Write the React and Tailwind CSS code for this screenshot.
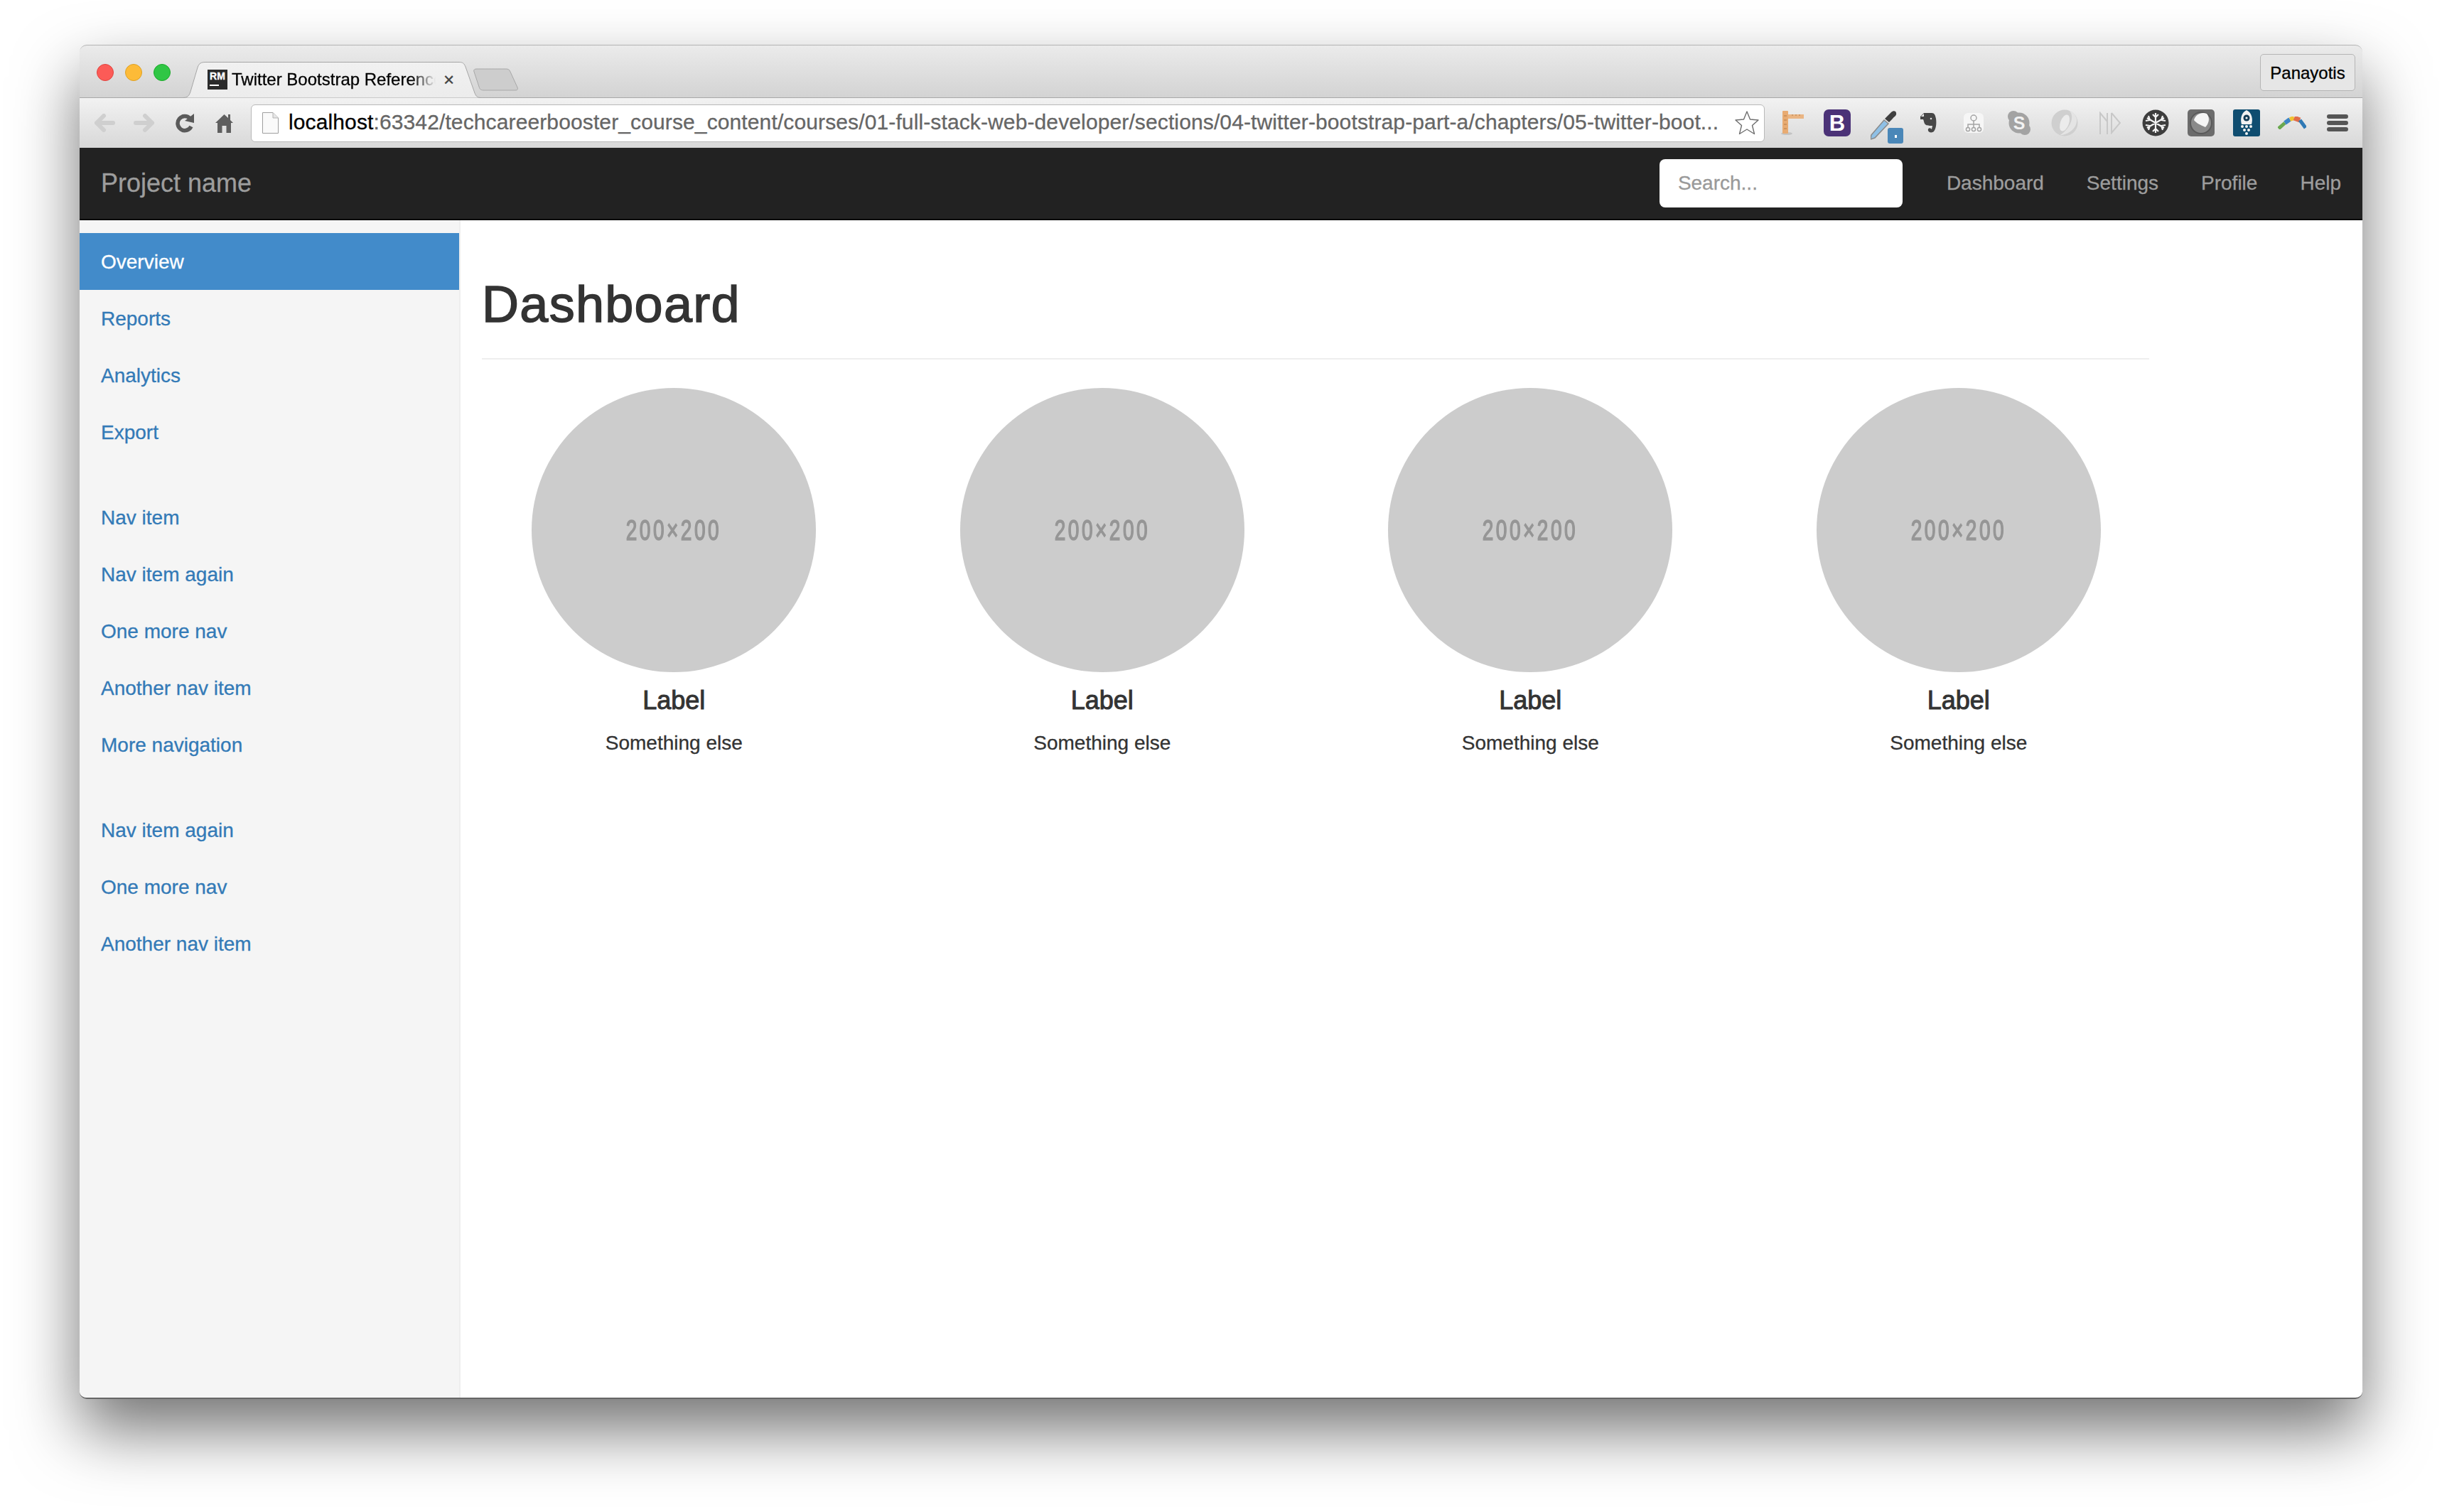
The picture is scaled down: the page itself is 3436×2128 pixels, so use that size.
import React from "react";

const navGroups = [
  ["Overview", "Reports", "Analytics", "Export"],
  ["Nav item", "Nav item again", "One more nav", "Another nav item", "More navigation"],
  ["Nav item again", "One more nav", "Another nav item"],
];

const topLinks = ["Dashboard", "Settings", "Profile", "Help"];

function TabShape() {
  return (
    <svg className="absolute left-0 top-0" width="420" height="51" viewBox="0 0 420 51">
      <defs>
        <linearGradient id="tabFill" x1="0" y1="0" x2="0" y2="1">
          <stop offset="0" stopColor="#f1f1f1" />
          <stop offset="1" stopColor="#ececec" />
        </linearGradient>
      </defs>
      <path
        d="M0 50.5 C7 50.5 9 48 11 42 L21 8 C23 2 26 0.5 32 0.5 L389 0.5 C394 0.5 396 2 398 7 L411 44 C413 49 415 50.5 420 50.5"
        fill="url(#tabFill)"
        stroke="#a6a6a6"
      />
    </svg>
  );
}

function NewTab() {
  return (
    <svg className="ml-[-11px] mb-[9px]" width="64" height="32" viewBox="0 0 64 32">
      <path
        d="M1 5 C0 2 2 1 5 1 L46 1 C49 1 51 2 52 5 L62 27 C63 30 62 31 59 31 L15 31 C11 31 9 30 8 26 Z"
        fill="#cdcdcd"
        stroke="#a8a8a8"
      />
    </svg>
  );
}

function Favicon() {
  return (
    <div className="relative w-[28px] h-[28px] bg-[#2b2b2b] text-white font-bold text-[14px] leading-[18px] text-center overflow-hidden">
      RM
      <div className="absolute left-[3px] top-[21px] w-[13px] h-[2px] bg-white" />
    </div>
  );
}

function Arrow({ flip, className }) {
  return (
    <svg className={className} width="31" height="26" viewBox="0 0 31 26">
      <path
        d={flip ? "M27 13 L4 13 M17 3 L27 13 L17 23" : "M4 13 L27 13 M14 3 L4 13 L14 23"}
        fill="none"
        stroke="#cfcfcf"
        strokeWidth="6"
        strokeLinecap="round"
        strokeLinejoin="round"
      />
    </svg>
  );
}

function Reload() {
  return (
    <svg className="ml-[28px]" width="28" height="28" viewBox="0 0 28 28">
      <path d="M21.5 8 A10 10 0 1 0 23 19" fill="none" stroke="#5a5a5a" strokeWidth="5.5" />
      <path d="M14 11 L27 1 L27 14 Z" fill="#5a5a5a" />
    </svg>
  );
}

function Home() {
  return (
    <svg className="ml-[29px]" width="25" height="27" viewBox="0 0 25 27">
      <path
        d="M12.5 1 L18 6 L18 1 L21 1 L21 9 L25 13 L22 13 L22 27 L15.5 27 L15.5 17 L9.5 17 L9.5 27 L3 27 L3 13 L0 13 Z"
        fill="#5f5f5f"
      />
    </svg>
  );
}

function PageIcon() {
  return (
    <svg className="ml-[15px]" width="23" height="30" viewBox="0 0 23 30">
      <path d="M0.5 0.5 L15 0.5 L22.5 8 L22.5 29.5 L0.5 29.5 Z" fill="#fafafa" stroke="#9f9f9f" />
      <path d="M15 0.5 L15 8 L22.5 8" fill="#e6e6e6" stroke="#b5b5b5" />
    </svg>
  );
}

function Star() {
  return (
    <svg className="ml-auto mr-[6px]" width="36" height="36" viewBox="0 0 36 36">
      <path
        d="M18 2 L22.5 13 L34 14 L25.5 21.5 L28.5 33.5 L18 27 L7.5 33.5 L10.5 21.5 L2 14 L13.5 13 Z"
        fill="#fff"
        stroke="#6e6e6e"
        strokeWidth="1.4"
        strokeLinejoin="round"
      />
    </svg>
  );
}

function Extensions() {
  return (
    <div className="flex items-center">
      <svg className="ml-[23px]" width="32" height="34" viewBox="0 0 32 34">
        <ellipse cx="8" cy="32" rx="8" ry="2" fill="#c4c4c4" />
        <rect x="9" y="5" width="23" height="6" fill="#eab583" />
        <rect x="2" y="0" width="8" height="32" rx="1" fill="#e8ab72" />
        <path d="M4 7h4M4 13h4M4 19h4M4 25h4M16 5v2M21 5v2M26 5v2" stroke="#b57d46" strokeWidth="1" />
      </svg>
      <svg className="ml-[28px]" width="38" height="38" viewBox="0 0 38 38">
        <rect width="38" height="38" rx="7" fill="#4b3277" />
        <text x="19" y="30" textAnchor="middle" fontFamily="Liberation Sans" fontWeight="700" fontSize="31" fill="#fff">B</text>
      </svg>
      <svg className="ml-[28px] mt-[10px]" width="46" height="48" viewBox="0 0 46 48">
        <path d="M1 36 L19 15 L25 20 L6 40 L0 42 Z" fill="#8fc0e6" stroke="#8a8a8a" strokeWidth="1.5" />
        <path d="M20 13 L29 4 C32 1 36 2 36 5 C37 9 33 10 31 13 L26 18 Z" fill="#3f3f3f" />
        <rect x="24" y="26" width="22" height="22" rx="3" fill="#4a87b8" />
        <rect x="34" y="36" width="3" height="4" fill="#fff" />
      </svg>
      <svg className="ml-[23px]" width="24" height="28" viewBox="0 0 24 28">
        <path
          d="M6 0 L17 0 C21 0 22 3 23 8 C24 15 23 22 20 26 C18 28 13 28 12 25 C11 22 14 20 16 22 L17 23 L18 18 C13 18 9 18 7 15 C6 13 6 11 5 9 L1 9 L1 5 Z"
          fill="#474747"
        />
        <path d="M2 5 L6 1 L6 5 Z" fill="#eee" />
        <circle cx="16" cy="8" r="1.3" fill="#ddd" />
      </svg>
      <svg className="ml-[38px]" width="28" height="28" viewBox="0 0 28 28">
        <rect width="28" height="28" rx="6" fill="#f6f6f6" />
        <circle cx="14" cy="7" r="4" fill="none" stroke="#a4a4a4" strokeWidth="1.5" />
        <path d="M14 11 V16 M6 21 V16 H22 V21 M14 16 V21" fill="none" stroke="#a4a4a4" strokeWidth="1.5" />
        <circle cx="6" cy="23" r="2.6" fill="none" stroke="#a4a4a4" strokeWidth="1.5" />
        <circle cx="14" cy="23" r="2.6" fill="none" stroke="#a4a4a4" strokeWidth="1.5" />
        <circle cx="22" cy="23" r="2.6" fill="none" stroke="#a4a4a4" strokeWidth="1.5" />
      </svg>
      <svg className="ml-[33px]" width="34" height="36" viewBox="0 0 34 36">
        <circle cx="17" cy="18" r="14.5" fill="#a3a3a3" />
        <circle cx="9" cy="9" r="8" fill="#a3a3a3" />
        <circle cx="25" cy="27" r="8" fill="#a3a3a3" />
        <text x="17" y="27" textAnchor="middle" fontFamily="Liberation Sans" fontWeight="700" fontSize="25" fill="#f2f2f2">S</text>
      </svg>
      <svg className="ml-[28px]" width="38" height="38" viewBox="0 0 38 38">
        <circle cx="19" cy="19" r="18.5" fill="#cfcfcf" />
        <ellipse cx="19" cy="19" rx="6" ry="12" transform="rotate(20 19 19)" fill="#ececec" />
        <path d="M26 2 C33 10 28 26 13 36 C22 36 37 28 36 14 C35 8 31 4 26 2 Z" fill="#e4e4e4" />
      </svg>
      <svg className="ml-[30px]" width="30" height="32" viewBox="0 0 30 32">
        <path d="M1 32 V2 L11 14 M11 32 V2 M17 2 L29 16 L17 30 V2" fill="none" stroke="#c8c8c8" strokeWidth="2" />
      </svg>
      <svg className="ml-[30px]" width="38" height="38" viewBox="0 0 38 38">
        <circle cx="19" cy="19" r="18.5" fill="#3d3d3d" />
        <path
          d="M19 5 V33 M7 12 L31 26 M31 12 L7 26 M15 7 L19 11 L23 7 M15 31 L19 27 L23 31 M5 16 L11 15 L9 9 M33 22 L27 23 L29 29 M33 16 L27 15 L29 9 M5 22 L11 23 L9 29"
          fill="none"
          stroke="#f4f4f4"
          strokeWidth="2.2"
        />
      </svg>
      <svg className="ml-[26px]" width="38" height="38" viewBox="0 0 38 38">
        <rect width="38" height="38" rx="5" fill="#6c6c6c" />
        <circle cx="19" cy="19" r="15" fill="#8a8a8a" stroke="#5a5a5a" strokeWidth="2" />
        <path d="M9 15 C11 6 21 3 27 6 C32 12 30 20 25 25 C18 22 12 19 9 15 Z" fill="#f5f5f5" />
      </svg>
      <svg className="ml-[26px]" width="38" height="38" viewBox="0 0 38 38">
        <rect width="38" height="38" rx="3" fill="#0f4d70" />
        <path d="M19 1 C27 5 28 14 26 21 L12 21 C10 14 11 5 19 1 Z" fill="#f2f2f2" />
        <circle cx="19" cy="12" r="4.5" fill="#143c55" />
        <circle cx="19" cy="12" r="1.6" fill="#f2f2f2" />
        <circle cx="13" cy="24" r="2" fill="#f2f2f2" />
        <circle cx="19" cy="24" r="2" fill="#f2f2f2" />
        <circle cx="25" cy="24" r="2" fill="#f2f2f2" />
        <circle cx="16" cy="29" r="2" fill="#f2f2f2" />
        <circle cx="22" cy="29" r="2" fill="#f2f2f2" />
        <circle cx="19" cy="34" r="2" fill="#f2f2f2" />
      </svg>
      <svg className="ml-[25px]" width="40" height="18" viewBox="0 0 40 18">
        <path d="M1 17 L10 9" stroke="#6aa84f" strokeWidth="5" fill="none" />
        <path d="M10 9 L17 4" stroke="#3d85c6" strokeWidth="6" fill="none" />
        <path d="M17 4 L23 2" stroke="#f1c232" strokeWidth="6" fill="none" />
        <path d="M23 2 L31 5" stroke="#e06c4a" strokeWidth="7" fill="none" />
        <path d="M31 5 L39 16" stroke="#2f79b5" strokeWidth="5" fill="none" />
      </svg>
      <div className="ml-[29px] flex flex-col gap-[3px]">
        <div className="w-[30px] h-[6px] rounded-[3px] bg-[#555]" />
        <div className="w-[30px] h-[6px] rounded-[3px] bg-[#555]" />
        <div className="w-[30px] h-[6px] rounded-[3px] bg-[#555]" />
      </div>
    </div>
  );
}

function BrowserChrome() {
  return (
    <>
      <div className="h-[74px] flex items-end rounded-t-[10px] border-t border-[#b4b4b4] bg-gradient-to-b from-[#ebebeb] to-[#d3d3d3] shrink-0">
        <div className="flex gap-[16px] ml-[24px] mb-[23px]">
          <div className="w-[24px] h-[24px] rounded-full bg-[#fc5b57] border border-[#e0443e]" />
          <div className="w-[24px] h-[24px] rounded-full bg-[#fdbb38] border border-[#dea123]" />
          <div className="w-[24px] h-[24px] rounded-full bg-[#30c645] border border-[#1aab29]" />
        </div>
        <div className="relative ml-[17px] mb-[-1px] w-[420px] h-[51px] z-10">
          <TabShape />
          <div className="relative flex items-center h-full pl-[35px] pb-[2px]">
            <Favicon />
            <div className="ml-[6px] w-[287px] overflow-hidden whitespace-nowrap text-[24px] text-black [mask-image:linear-gradient(to_right,black_88%,transparent)]">
              Twitter Bootstrap Reference
            </div>
            <div className="ml-[11px] text-[26px] leading-none text-[#444]">×</div>
          </div>
        </div>
        <NewTab />
        <div className="ml-auto mr-[10px] mb-[9px] pt-[2px] w-[134px] h-[52px] flex items-center justify-center rounded-[5px] border border-[#b5b5b5] bg-[#e6e6e6] text-[24px] text-black">
          Panayotis
        </div>
      </div>
      <div className="h-[71px] flex items-center pl-[20px] pr-[20px] border-t border-[#a8a8a8] bg-gradient-to-b from-[#f2f2f2] to-[#d8d8d8] shrink-0">
        <Arrow />
        <Arrow flip className="ml-[24px]" />
        <Reload />
        <Home />
        <div className="ml-[25px] w-[2130px] h-[53px] flex items-center rounded-[6px] border border-[#b9b9b9] bg-white">
          <PageIcon />
          <div className="ml-[14px] pb-[3px] whitespace-nowrap text-[30px] tracking-[0.12px] text-[#666]">
            <span className="text-black">localhost</span>
            :63342/techcareerbooster_course_content/courses/01-full-stack-web-developer/sections/04-twitter-bootstrap-part-a/chapters/05-twitter-boot...
          </div>
          <Star />
        </div>
        <Extensions />
      </div>
    </>
  );
}

function Navbar() {
  return (
    <div className="h-[102px] flex items-center pl-[30px] bg-[#222] border-b-2 border-[#080808] shrink-0">
      <div className="text-[36px] text-[#9d9d9d]">Project name</div>
      <div className="ml-auto flex items-center">
        <input
          placeholder="Search..."
          className="w-[342px] h-[68px] px-[26px] rounded-[8px] bg-white text-[28px] outline-none placeholder:text-[#999]"
        />
        <div className="ml-[32px] flex">
          {topLinks.map((link) => (
            <a key={link} className="px-[30px] text-[28px] text-[#9d9d9d]">
              {link}
            </a>
          ))}
        </div>
      </div>
    </div>
  );
}

function Sidebar() {
  return (
    <div className="w-[536px] shrink-0 pt-[18px] bg-[#f5f5f5] border-r-2 border-[#eee] flex flex-col gap-[40px]">
      {navGroups.map((group, i) => (
        <ul key={i}>
          {group.map((item) => {
            const active = item === "Overview";
            return (
              <li
                key={item}
                className={
                  active
                    ? "h-[80px] leading-[81px] pl-[30px] text-[28px] text-white bg-[#428bca]"
                    : "h-[80px] leading-[81px] pl-[30px] text-[28px] text-[#337ab7]"
                }
              >
                {item}
              </li>
            );
          })}
        </ul>
      ))}
    </div>
  );
}

function Placeholder() {
  return (
    <div className="flex flex-col items-center">
      <div className="w-[400px] h-[400px] rounded-full bg-[#ccc] flex items-center justify-center">
        <span className="text-[40px] leading-none tracking-[5px] text-[#969696] scale-x-[0.7] whitespace-nowrap [-webkit-text-stroke:1.6px_#969696]">200×200</span>
      </div>
      <div className="mt-[20px] text-[36px] leading-[40px] text-[#333] [-webkit-text-stroke:1px_#333]">Label</div>
      <div className="mt-[20px] text-[28px] leading-[40px] text-[#333]">Something else</div>
    </div>
  );
}

export default function App() {
  return (
    <div className="w-[3436px] h-[2128px] bg-white overflow-hidden pt-[63px] pl-[112px] font-['Liberation_Sans',sans-serif] [-webkit-text-stroke:0.3px]">
      <div className="w-[3212px] h-[1906px] flex flex-col rounded-[10px] bg-white border-b-2 border-[#666] shadow-[0_44px_90px_rgba(0,0,0,0.55)]">
        <BrowserChrome />
        <Navbar />
        <div className="flex flex-1 min-h-0 overflow-hidden rounded-b-[10px]">
          <Sidebar />
          <div className="pl-[30px] pt-[79px]">
            <div className="w-[2346px] pb-[36px] border-b-2 border-[#eee]">
              <h1 className="text-[72px] leading-[79px] tracking-[1.3px] text-[#333] font-normal [-webkit-text-stroke:1.5px_#333]">Dashboard</h1>
            </div>
            <div className="mt-[40px] ml-[-31px] w-[2410px] grid grid-cols-4">
              <Placeholder />
              <Placeholder />
              <Placeholder />
              <Placeholder />
            </div>
          </div>
        </div>
      </div>
    </div>
  );
}
